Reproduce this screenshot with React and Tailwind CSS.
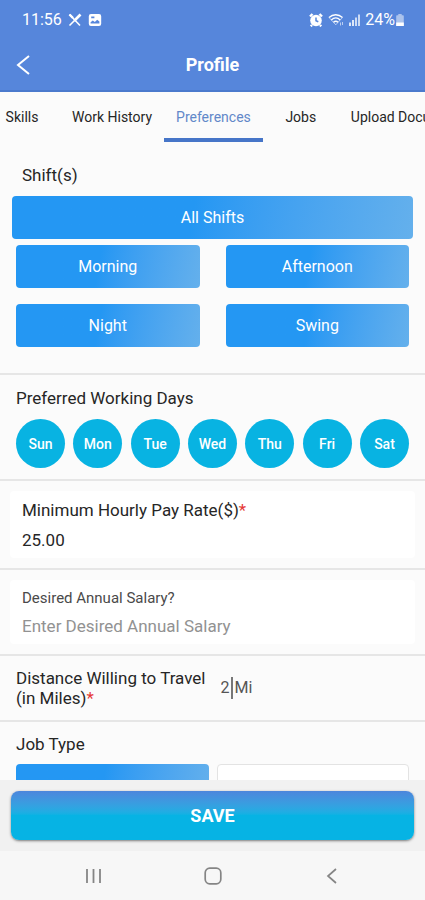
import React, { useState } from 'react';

const TABS = ['Skills', 'Work History', 'Preferences', 'Jobs', 'Upload Documents'];
const SHIFTS = ['Morning', 'Afternoon', 'Night', 'Swing'];
const DAYS = ['Sun', 'Mon', 'Tue', 'Wed', 'Thu', 'Fri', 'Sat'];

function StatusBar() {
  return (
    <div className="flex h-10 items-center justify-between pl-[22px] pr-5 text-white">
      <div className="flex items-center gap-[6px]">
        <span className="text-base">11:56</span>
        <svg className="h-[14px] w-[14px]" viewBox="0 0 14 14" fill="none" stroke="currentColor">
          <path d="M1.5 1.5 12 12.5" strokeWidth="1.6" />
          <path d="M12.5 1.5 6 8" strokeWidth="2.6" />
          <path d="M6 8 1.5 12.5" strokeWidth="1.6" />
          <path d="M1.5 1.5 5 5" strokeWidth="2.4" />
        </svg>
        <svg className="h-[14px] w-[14px]" viewBox="0 0 14 14">
          <path
            fill="currentColor"
            fillRule="evenodd"
            d="M3 1h8a2.2 2.2 0 0 1 2.2 2.2v7.6A2.2 2.2 0 0 1 11 13H3a2.2 2.2 0 0 1-2.2-2.2V3.2A2.2 2.2 0 0 1 3 1ZM2.6 10.6h8.8V8.5L9.2 6.8 6.8 9 4.8 7.4 2.6 9.2ZM3.2 3.4v1.800h3.200V3.400Z"
          />
        </svg>
      </div>
      <div className="flex items-center gap-1">
        <svg className="h-[14px] w-[14px]" viewBox="0 0 14 14">
          <circle cx="7" cy="7.5" r="5.8" fill="currentColor" />
          <path d="M1 3.5 3.5 1M10.5 1 13 3.5M3 12l-1.2 1.3M11 12l1.200 1.300" stroke="currentColor" strokeWidth="2.4" />
          <path d="M7 4.5v3.300l2.300 1" fill="none" stroke="#5686db" strokeWidth="1.5" />
        </svg>
        <svg className="ml-px h-[14px] w-4" viewBox="0 0 16 14" fill="none" stroke="currentColor" strokeWidth="1.3">
          <path d="M1 4.5C5 .8 10.5.8 14.5 4.5M3.300 7C6 4.500 9.500 4.500 12.200 7M5.500 9.200c1.400-1.200 3.200-1.200 4.600 0" />
          <path d="m1 4.500 6.800 7.300L14.500 4.500" strokeOpacity=".55" strokeWidth="1" />
          <path d="M12.500 9.500v3M14.500 9v3" strokeOpacity=".6" strokeWidth="1" />
        </svg>
        <svg className="ml-px h-[14px] w-3" viewBox="0 0 12 14" fill="currentColor">
          <rect x="0" y="9.5" width="2" height="3.5" fillOpacity=".8" />
          <rect x="3" y="7" width="2" height="6" fillOpacity=".8" />
          <rect x="6" y="4.5" width="2" height="8.5" fillOpacity=".7" />
          <rect x="9" y="1.5" width="2" height="11.5" fillOpacity=".7" />
        </svg>
        <div className="flex items-center">
          <span className="text-base">24%</span>
          <svg className="h-[14px] w-[10px]" viewBox="0 0 10 14" fill="currentColor">
            <path d="M3.3 1h3.400v1.200h1.100c.6 0 1 .4 1 1V13H1.200V3.200c0-.6.4-1 1-1h1.100Z" fillOpacity=".5" />
            <rect x="1.2" y="9.5" width="7.6" height="3.5" />
          </svg>
        </div>
      </div>
    </div>
  );
}

function ShiftButton({ children }) {
  return (
    <button
      type="button"
      className="h-[43px] w-full rounded-[4px] bg-linear-100 from-[#2497f3] from-45% to-[#64b0ec] text-base text-white"
    >
      {children}
    </button>
  );
}

export default function App() {
  const [activeTab, setActiveTab] = useState('Preferences');
  const [payRate, setPayRate] = useState('25.00');
  const [salary, setSalary] = useState('');
  const [distance, setDistance] = useState('2');

  return (
    <div className="flex h-screen flex-col overflow-hidden bg-[#fbfbfb] font-[Roboto,sans-serif] text-[#262626]">
      <header className="shrink-0 border-b-2 border-[#4b7acd] bg-[#5686db]">
        <StatusBar />
        <div className="grid h-[50px] grid-cols-[48px_1fr_48px] items-center text-white">
          <button type="button" aria-label="Back" className="flex h-full items-center pl-4">
            <svg className="h-5 w-[14px]" viewBox="0 0 14 20" fill="none" stroke="currentColor" strokeWidth="2">
              <path d="M13 1 2 10l11 9" />
            </svg>
          </button>
          <h1 className="text-center text-lg font-bold">Profile</h1>
        </div>
      </header>

      <nav className="-ml-4 flex h-[50px] shrink-0">
        {TABS.map(tab => (
          <button
            key={tab}
            type="button"
            onClick={() => setActiveTab(tab)}
            className={`min-w-[76px] shrink-0 border-b-4 px-3 pt-1 text-sm whitespace-nowrap ${
              tab === activeTab ? 'border-[#4675c8] text-[#6288c9]' : 'border-transparent'
            }`}
          >
            {tab}
          </button>
        ))}
      </nav>

      <main className="min-h-0 flex-1 overflow-hidden">
        <section className="px-3 pt-[21px] pb-[26px]">
          <h2 className="mb-[9px] px-[10px] text-[17px] leading-6">Shift(s)</h2>
          <ShiftButton>All Shifts</ShiftButton>
          <div className="mt-[6px] grid grid-cols-2 gap-x-[26px] gap-y-4 px-1">
            {SHIFTS.map(shift => (
              <ShiftButton key={shift}>{shift}</ShiftButton>
            ))}
          </div>
        </section>

        <section className="border-t-2 border-[#e6e6e6] px-4 pt-[11px] pb-[11px]">
          <h2 className="text-[17px] leading-6">Preferred Working Days</h2>
          <div className="mt-[9px] flex justify-between">
            {DAYS.map(day => (
              <button
                key={day}
                type="button"
                className="size-[49px] rounded-full bg-[#08b3e2] text-sm font-medium text-white"
              >
                {day}
              </button>
            ))}
          </div>
        </section>

        <section className="border-t-2 border-[#e6e6e6] px-[10px] py-[10px]">
          <div className="rounded-[4px] bg-white px-3 pt-[7px] pb-[6px]">
            <label htmlFor="pay-rate" className="block text-[17px] leading-6">
              Minimum Hourly Pay Rate($)<span className="text-[#e53935]">*</span>
            </label>
            <input
              id="pay-rate"
              type="text"
              value={payRate}
              onChange={e => setPayRate(e.target.value)}
              className="mt-[6px] block w-full bg-transparent text-[17px] leading-6 outline-none"
            />
          </div>
        </section>

        <section className="border-t-2 border-[#e6e6e6] px-[10px] py-[10px]">
          <div className="rounded-[4px] bg-white px-3 py-[6px]">
            <label htmlFor="salary" className="block text-[15px] leading-6 text-[#4a4a4a]">
              Desired Annual Salary?
            </label>
            <input
              id="salary"
              type="text"
              value={salary}
              onChange={e => setSalary(e.target.value)}
              placeholder="Enter Desired Annual Salary"
              className="mt-1 block w-full bg-transparent text-[17px] leading-6 outline-none placeholder:text-[#929292]"
            />
          </div>
        </section>

        <section className="flex items-center border-t-2 border-[#e6e6e6] px-4 py-3">
          <label htmlFor="distance" className="w-1/2 text-[17px] leading-5">
            Distance Willing to Travel
            <br />
            (in Miles)<span className="text-[#e53935]">*</span>
          </label>
          <div className="flex items-center gap-[2px] pl-2 text-base text-[#555]">
            <input
              id="distance"
              type="text"
              value={distance}
              onChange={e => setDistance(e.target.value)}
              className="h-[22px] w-3 border-r-2 border-[#777] bg-transparent outline-none"
            />
            <span>Mi</span>
          </div>
        </section>

        <section className="border-t-2 border-[#e6e6e6] px-4 pt-[10px]">
          <h2 id="job-type" className="text-[17px] leading-6">Job Type</h2>
          <div className="mt-2 grid grid-cols-2 gap-2">
            <button
              type="button"
              aria-labelledby="job-type"
              className="h-[43px] rounded-[4px] bg-linear-100 from-[#2497f3] from-45% to-[#64b0ec]"
            />
            <button
              type="button"
              aria-labelledby="job-type"
              className="h-[43px] rounded-[4px] border border-[#e3e3e3] bg-white"
            />
          </div>
        </section>
      </main>

      <footer className="shrink-0 bg-[#f1f1f1] px-[11px] pt-[11px] pb-[11px]">
        <button
          type="button"
          className="block h-[49px] w-full rounded-lg bg-linear-to-b from-[#4c86dc] to-[#06b3e4] to-50% text-lg font-bold text-white shadow-sm shadow-black/40"
        >
          SAVE
        </button>
      </footer>

      <nav className="flex h-[49px] shrink-0 items-center justify-between bg-[#f7f7f7] px-[82px] text-[#858585]">
        <button type="button" aria-label="Recent apps">
          <svg className="h-[18px] w-[22px]" viewBox="0 0 22 18" stroke="currentColor" strokeWidth="1.8">
            <path d="M5 2v14M11.500 2v14M18 2v14" />
          </svg>
        </button>
        <button type="button" aria-label="Home">
          <svg className="h-[18px] w-[22px]" viewBox="0 0 22 18" fill="none" stroke="currentColor" strokeWidth="1.7">
            <rect x="3.2" y="1.2" width="15.6" height="15.6" rx="4.5" />
          </svg>
        </button>
        <button type="button" aria-label="Previous">
          <svg className="h-[18px] w-[22px]" viewBox="0 0 22 18" fill="none" stroke="currentColor" strokeWidth="1.7">
            <path d="M15 2 7 9l8 7" />
          </svg>
        </button>
      </nav>
    </div>
  );
}
